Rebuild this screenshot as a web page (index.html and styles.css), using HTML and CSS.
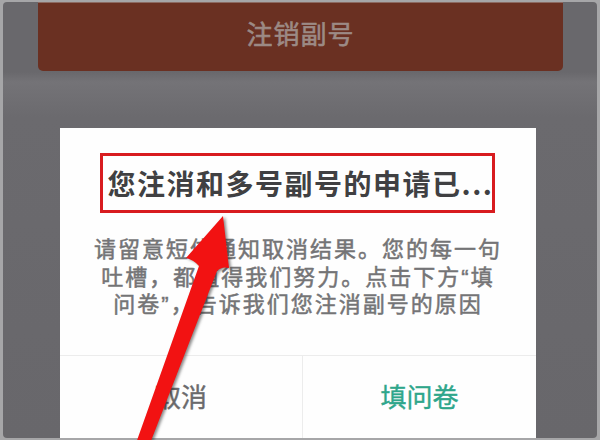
FILE: index.html
```html
<!DOCTYPE html>
<html lang="zh-CN">
<head>
<meta charset="utf-8">
<title>注销副号</title>
<link rel="stylesheet" href="styles.css">
</head>
<body>
<div class="phone">
  <div class="top-btn">注销副号</div>
  <div class="dialog">
    <div class="title-box"><h1 class="title">您注消和多号副号的申请已...</h1></div>
    <div class="msg">
      <div class="line">请留意短信通知取消结果。您的每一句</div>
      <div class="line">吐槽，都值得我们努力。点击下方“填</div>
      <div class="line">问卷”，告诉我们您注消副号的原因</div>
    </div>
    <div class="actions">
      <div class="act cancel">取消</div>
      <div class="act ok">填问卷</div>
    </div>
  </div>
</div>
<svg class="arrow" width="600" height="440" viewBox="0 0 600 440" aria-hidden="true">
  <path d="M223 216 L229 268 Q222 266 217 271 L149 446 L135 446 L199 266 Q194 260 186 258 Z" fill="#f21212"/>
</svg>
</body>
</html>
```
FILE: styles.css
```css
html, body {
  margin: 0;
  padding: 0;
}
body {
  width: 600px;
  height: 440px;
  overflow: hidden;
  background: #a6a6a8;
  font-family: "Noto Sans CJK SC", "Noto Sans", sans-serif;
  position: relative;
}
.phone {
  margin: 2px 3px 0 3px;
  height: 436px;
  background: linear-gradient(#69686c 0, #69686c 70px, #747377 80px, #6b6a6e 115px, #68676b 100%);
  border-radius: 4px;
  overflow: hidden;
  display: flex;
  flex-direction: column;
}
.top-btn {
  margin: 0 34px 0 35px;
  height: 69px;
  background: #6a3022;
  border-top: 1px solid #8c6a62;
  box-sizing: border-box;
  border-radius: 0 0 5px 5px;
  color: #9c8a85;
  font-size: 26px;
  letter-spacing: 1px;
  -webkit-text-stroke: 0.6px #9c8a85;
  display: flex;
  align-items: center;
  justify-content: center;
  padding-bottom: 10px;
}
.dialog {
  margin: 57px 61px 0 57px;
  flex: 1;
  background: #fefefe;
  display: flex;
  flex-direction: column;
}
.title-box {
  margin: 25px 41px 0 40px;
  height: 60px;
  box-sizing: border-box;
  border: 3px solid #d81c1f;
  display: flex;
  align-items: center;
  justify-content: center;
}
.title {
  margin: 0;
  font-size: 28px;
  letter-spacing: 1.5px;
  font-weight: bold;
  color: #404042;
  white-space: nowrap;
  padding-left: 6px;
}
.msg {
  margin: 23px 0 0 0;
  padding-bottom: 36px;
  border-bottom: 1px solid #ececec;
  color: #747476;
  text-align: center;
  font-family: "Liberation Sans", "Noto Sans CJK SC", sans-serif;
}
.line {
  height: 27.5px;
  font-size: 22px;
  line-height: 27.5px;
  letter-spacing: 2px;
  -webkit-text-stroke: 0.5px #747476;
  white-space: nowrap;
}
.actions {
  flex: 1;
  display: flex;
}
.act {
  display: flex;
  align-items: center;
  justify-content: center;
  font-size: 26px;
  padding-bottom: 2px;
}
.cancel {
  width: 242px;
  border-right: 1px solid #ececec;
  color: #6a6a6c;
  -webkit-text-stroke: 0.4px #6a6a6c;
}
.ok {
  flex: 1;
  color: #2ea68b;
  -webkit-text-stroke: 0.4px #2ea68b;
}
.arrow {
  position: absolute;
  left: 0;
  top: 0;
  filter: drop-shadow(2px 1px 1.5px rgba(40, 40, 40, 0.55));
}
```
